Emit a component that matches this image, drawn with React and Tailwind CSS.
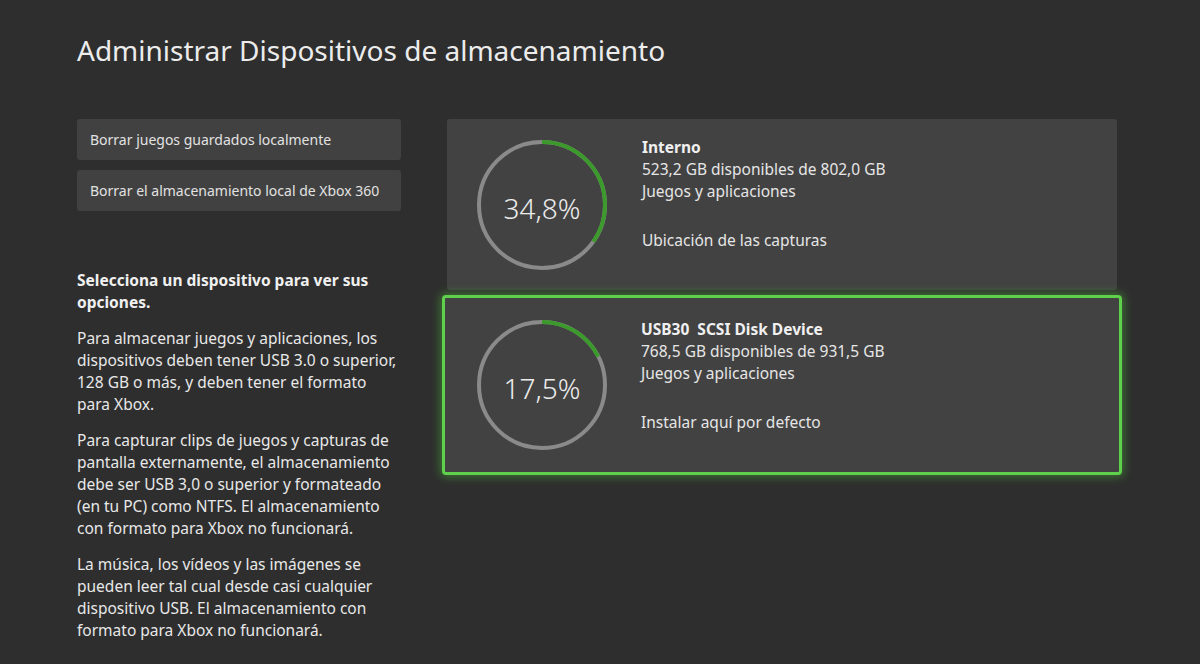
import React from 'react';

const font = { fontFamily: '"Noto Sans", "Open Sans", sans-serif' };

function Ring({ pct, label }) {
  const r = 63;
  const c = 2 * Math.PI * r;
  return (
    <div className="relative w-[132px] h-[132px] shrink-0">
      <svg width="132" height="132" viewBox="0 0 132 132" className="absolute inset-0">
        <circle cx="66" cy="66" r={r} fill="none" stroke="#8a8a8a" strokeWidth="4" />
        <circle
          cx="66" cy="66" r={r} fill="none" stroke="#3c9a2c" strokeWidth="4"
          strokeDasharray={`${(pct / 100) * c} ${c}`}
          transform="rotate(-90 66 66)"
        />
      </svg>
      <div className="absolute inset-0 flex items-center justify-center text-[28px] font-light text-[#ececec] pt-[6px]">{label}</div>
    </div>
  );
}

function DeviceCard({ name, free, pct, label, action, selected }) {
  return (
    <div
      className={
        selected
          ? 'flex items-center -mx-[5px] h-[180px] rounded-[4px] bg-[#424242] border-[3px] border-[#5fd04c] shadow-[0_0_10px_2px_rgba(80,200,60,0.45)] pl-[31px]'
          : 'flex items-center h-[171px] rounded-[3px] bg-[#424242] pl-[29px]'
      }
    >
      <Ring pct={pct} label={label} />
      <div className={selected ? 'self-start pt-[20px] ml-[33px]' : 'self-start pt-[17px] ml-[34px]'}>
        <div className="text-[15.5px] leading-[22px] font-bold text-[#f0f0f0] whitespace-pre">{name}</div>
        <div className="text-[15.5px] leading-[22px] text-[#e6e6e6]">{free}</div>
        <div className="text-[15.5px] leading-[22px] text-[#e6e6e6]">Juegos y aplicaciones</div>
        <div className="text-[15.5px] leading-[22px] text-[#e6e6e6] mt-[27px]">{action}</div>
      </div>
    </div>
  );
}

export default function App() {
  return (
    <div className="w-[1200px] h-[664px] bg-[#2e2e2e] overflow-hidden text-[#e8e8e8]" style={font}>
      <div className="pl-[77px] pt-[30px] text-[28px] leading-[40px] text-[#ececec]">
        Administrar Dispositivos de almacenamiento
      </div>
      <div className="flex pl-[77px] mt-[49px]">
        <div className="w-[324px] shrink-0">
          <div className="flex flex-col gap-[10px]">
            <div className="h-[41px] rounded-[3px] bg-[#414141] flex items-center px-[13px] text-[14px] text-[#e2e2e2]">
              Borrar juegos guardados localmente
            </div>
            <div className="h-[41px] rounded-[3px] bg-[#414141] flex items-center px-[13px] text-[14px] text-[#e2e2e2]">
              Borrar el almacenamiento local de Xbox 360
            </div>
          </div>
          <div className="mt-[58px] text-[15.5px] leading-[22px] w-[324px]">
            <p className="font-bold text-[#f0f0f0]">Selecciona un dispositivo para ver sus opciones.</p>
            <p className="mt-[14px]">
              Para almacenar juegos y aplicaciones, los dispositivos deben tener USB 3.0 o superior, 128 GB o más, y deben tener el formato para Xbox.
            </p>
            <p className="mt-[14px]">
              Para capturar clips de juegos y capturas de pantalla externamente, el almacenamiento debe ser USB 3,0 o superior y formateado (en tu PC) como NTFS. El almacenamiento con formato para Xbox no funcionará.
            </p>
            <p className="mt-[14px]">
              La música, los vídeos y las imágenes se pueden leer tal cual desde casi cualquier dispositivo USB. El almacenamiento con formato para Xbox no funcionará.
            </p>
          </div>
        </div>
        <div className="ml-[46px] w-[670px] flex flex-col gap-[5px]">
          <DeviceCard
            name="Interno"
            free="523,2 GB disponibles de 802,0 GB"
            pct={34.8}
            label="34,8%"
            action="Ubicación de las capturas"
          />
          <DeviceCard
            selected
            name="USB30  SCSI Disk Device"
            free="768,5 GB disponibles de 931,5 GB"
            pct={17.5}
            label="17,5%"
            action="Instalar aquí por defecto"
          />
        </div>
      </div>
    </div>
  );
}
